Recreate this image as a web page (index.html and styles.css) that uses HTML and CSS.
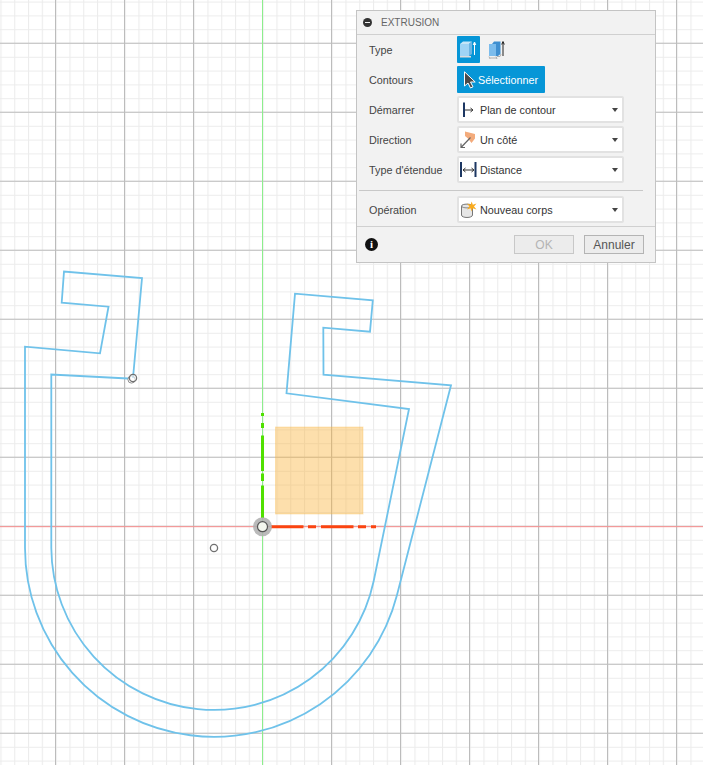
FILE: index.html
```html
<!DOCTYPE html>
<html lang="fr">
<head>
<meta charset="utf-8">
<title>Extrusion</title>
<link rel="stylesheet" href="styles.css">
</head>
<body>
<main class="viewport">
  <svg class="scene" width="703" height="765" viewBox="0 0 703 765" xmlns="http://www.w3.org/2000/svg">
    <defs>
      <pattern id="minor" patternUnits="userSpaceOnUse" x="0.4" y="1.6" width="13.8" height="13.8">
        <path class="grid-minor" d="M0.5 0V13.8M0 0.5H13.8"/>
      </pattern>
      <pattern id="major" patternUnits="userSpaceOnUse" x="55" y="42.7" width="69" height="69">
        <path class="grid-major" d="M0.5 0V69M0 0.5H69"/>
      </pattern>
    </defs>
    <rect width="703" height="765" fill="#fff"/>
    <rect width="703" height="765" fill="url(#minor)"/>
    <rect width="703" height="765" fill="url(#major)"/>
    <rect class="profile" x="275.5" y="427" width="87.5" height="87"/>
    <path class="axis-line-red" d="M0 526.7H703"/>
    <path class="axis-line-green" d="M262.5 0V765"/>
    <path class="sketch" d="M133 378L142 278L64 271.5L61.7 302.7L108.5 306.7L100 353.3L25 346.7V548A189 189 0 0 0 397 595L451 385.3L323.5 374.7L323.3 327.7L370 331.7L372.8 300.3L295 293.7L286.5 393.3L409 409L373.7 581A163 163 0 0 1 51.3 548V374.5L128 378.5"/>
    <path class="axis-red" d="M271 526.7H303.5M308 526.7H316M321 526.7H353.5M358 526.7H366M371 526.7H376"/>
    <path class="axis-green" d="M262.5 413V416M262.5 423V428M262.5 435.500V471M262.5 473.500V481M262.5 485.500V518"/>
    <circle class="origin-halo" cx="262.5" cy="526.7" r="9.5"/>
    <circle class="origin-dot" cx="262.5" cy="526.7" r="5"/>
    <circle class="point" cx="214" cy="548" r="3.6"/>
    <circle class="point-faint" cx="131.5" cy="379.5" r="3.6"/>
    <circle class="point" cx="133" cy="378" r="3.6"/>
  </svg>

  <section class="dialog">
    <header class="dialog-title">
      <span class="collapse"></span>
      <h1 class="title-text">EXTRUSION</h1>
    </header>
    <div class="dialog-body">
      <div class="row">
        <span class="label">Type</span>
        <div class="type-group">
          <button class="type-btn is-active">
            <svg width="23" height="27" viewBox="0 0 23 27"><path class="cube-front" d="M3 8H12V20H3Z"/><path class="cube-top" d="M3 8L6 5.500H15L12 8Z"/><path class="cube-side" d="M12 8L15 5.500V18L12 20Z"/><path class="cube-base" d="M3 20H14V21.500H3Z"/><path class="arrow-white" d="M17.500 19V7M16.200 9L17.500 6L18.800 9"/></svg>
          </button>
          <button class="type-btn">
            <svg width="23" height="27" viewBox="0 0 23 27"><path class="thin-back" d="M10 8L12 5.500H18.500V18L16 20H10Z"/><path class="thin-front" d="M7 8H14V20H7Z"/><path class="thin-edge" d="M7 20.500L8 23M14 20.500L15 23M8 22H15M15 20.500H18L19 18"/><path class="arrow-dark" d="M21 20V6M19.700 8.500L21 5.500L22.300 8.500"/></svg>
          </button>
        </div>
      </div>
      <div class="row">
        <span class="label">Contours</span>
        <button class="select-btn">
          <svg width="13" height="18" viewBox="0 0 13 18"><path class="cursor" d="M1.500 0.800V15L5 12L7.500 17L10 15.800L7.500 11H12.200Z"/></svg>
          <span>Sélectionner</span>
        </button>
      </div>
      <div class="row">
        <span class="label">Démarrer</span>
        <div class="combo">
          <svg class="combo-icon" width="20" height="20" viewBox="0 0 20 20"><path class="navy-bar" d="M4 2.500V17"/><path class="thin-dark" d="M5 10H12.500M10.500 8L13 10L10.500 12"/></svg>
          <span class="combo-text">Plan de contour</span>
          <span class="caret"></span>
        </div>
      </div>
      <div class="row">
        <span class="label">Direction</span>
        <div class="combo">
          <svg class="combo-icon" width="20" height="20" viewBox="0 0 20 20"><path class="flag" d="M5 1.500L15 4V8.500L11.500 13L8 8.500L5 6Z"/><path class="thin-grey" d="M1 17.500L10.500 7.500M1 13.500V17.500H5"/></svg>
          <span class="combo-text">Un côté</span>
          <span class="caret"></span>
        </div>
      </div>
      <div class="row">
        <span class="label">Type d'étendue</span>
        <div class="combo">
          <svg class="combo-icon" width="20" height="20" viewBox="0 0 20 20"><path class="navy-bar" d="M1 2V17M15.500 2V17"/><path class="thin-dark" d="M3 10H14M5.500 8L3 10L5.500 12M11.500 8L14 10L11.500 12"/></svg>
          <span class="combo-text">Distance</span>
          <span class="caret"></span>
        </div>
      </div>
      <div class="rule"></div>
      <div class="row">
        <span class="label">Opération</span>
        <div class="combo">
          <svg class="combo-icon" width="20" height="20" viewBox="0 0 20 20"><path class="can" d="M1.500 6C1.500 3.500 12.500 3.500 12.500 6V15C12.500 18.300 1.500 18.300 1.500 15Z"/><path class="can-top" d="M1.500 6C1.500 8.500 12.500 8.500 12.500 6"/><path class="spark" d="M11.700 1.500L12.800 4.700L16.500 3.500L14 6.500L16.500 9.500L12.800 8.300L11.700 11.500L10.600 8.300L7 9.500L9.400 6.500L7 3.500L10.600 4.700Z"/></svg>
          <span class="combo-text">Nouveau corps</span>
          <span class="caret"></span>
        </div>
      </div>
    </div>
    <footer class="dialog-foot">
      <span class="info">i</span>
      <div class="foot-actions">
        <button class="foot-btn is-disabled">OK</button>
        <button class="foot-btn">Annuler</button>
      </div>
    </footer>
  </section>
</main>
</body>
</html>
```

FILE: styles.css
```css
* { box-sizing: border-box; }
html, body { margin: 0; padding: 0; }
body {
  width: 703px;
  height: 765px;
  overflow: hidden;
  background: #fff;
  font-family: "Liberation Sans", Arial, sans-serif;
  font-size: 10.8px;
  color: #3c3c3c;
}
.viewport { position: relative; width: 703px; height: 765px; overflow: hidden; }
.scene { display: block; }

.grid-minor { fill: none; stroke: #ececec; stroke-width: 1.2; }
.grid-major { fill: none; stroke: #bcbcbc; stroke-width: 1.1; }
.profile { fill: #fab23a; stroke: #fab23a; stroke-width: 1; fill-opacity: .42; stroke-opacity: .3; }
.axis-line-red { fill: none; stroke: #fb8f8f; stroke-width: 1; }
.axis-line-green { fill: none; stroke: #8cee8c; stroke-width: 1; }
.sketch { fill: none; stroke: #6fc2ea; stroke-width: 1.8; }
.axis-red { fill: none; stroke: #fb4410; stroke-width: 3; }
.axis-green { fill: none; stroke: #50e000; stroke-width: 3; }
.origin-halo { fill: #aeaeae; fill-opacity: .85; }
.origin-dot { fill: #f3f6ee; stroke: #555; stroke-width: 1.2; }
.point { fill: #fff; fill-opacity: .6; stroke: #707070; stroke-width: 1.3; }
.point-faint { fill: none; stroke: #909090; stroke-width: 1; }

.dialog {
  position: absolute;
  left: 356px;
  top: 10px;
  width: 300px;
  height: 253px;
  display: flex;
  flex-direction: column;
  background: #f2f2f2;
  border: 1px solid #c4c4c4;
}
.dialog-title {
  display: flex;
  align-items: center;
  height: 24px;
  padding-left: 6px;
  gap: 9px;
  border-bottom: 1px solid #d0d0d0;
  flex: none;
}
.collapse {
  width: 9px;
  height: 9px;
  border-radius: 50%;
  background: #333;
  display: flex;
  align-items: center;
  justify-content: center;
}
.collapse::after { content: ""; width: 5px; height: 1px; background: #f2f2f2; }
.title-text { margin: 0; font-size: 10px; font-weight: 400; color: #666; }
.dialog-body { display: flex; flex-direction: column; gap: 3px; padding: 1px 0 0 1px; flex: none; }
.row { display: flex; align-items: center; height: 27px; padding-left: 11px; }
.label { width: 88px; flex: none; color: #444; }
.type-group { display: flex; gap: 2px; }
.type-btn {
  width: 23px;
  height: 27px;
  padding: 0;
  border: 0;
  border-radius: 1px;
  background: transparent;
  display: flex;
  align-items: center;
  justify-content: center;
}
.type-btn.is-active { background: #0696d7; }
.select-btn {
  display: flex;
  align-items: center;
  gap: 2px;
  width: 88px;
  height: 27px;
  padding: 0 0 0 6px;
  border: 0;
  border-radius: 1px;
  background: #0696d7;
  color: #fff;
  font: inherit;
}
.combo {
  display: flex;
  align-items: center;
  width: 167px;
  height: 27px;
  padding: 0 4px 0 1px;
  background: #fff;
  border: 2px solid #e2e2e2;
  border-radius: 2px;
}
.combo-icon { flex: none; }
.combo-text { flex: 1; color: #333; }
.caret { width: 0; height: 0; border-left: 3.5px solid transparent; border-right: 3.5px solid transparent; border-top: 4px solid #444; }
.rule { height: 1px; background: #c8c8c8; width: 284px; margin: 4px 0 2px 1px; }
.dialog-foot {
  flex: 1;
  margin-top: 3px;
  display: flex;
  align-items: center;
  justify-content: space-between;
  padding: 0 11px 0 8px;
  border-top: 1px solid #d0d0d0;
}
.info {
  width: 13px;
  height: 13px;
  border-radius: 50%;
  background: #111;
  color: #fff;
  font: 700 11px/13px "Liberation Serif", serif;
  text-align: center;
}
.foot-actions { display: flex; gap: 10px; }
.foot-btn {
  width: 60px;
  height: 19px;
  padding: 0;
  background: #ececec;
  border: 1px solid #b4b4b4;
  color: #555;
  font-family: inherit;
  font-size: 12px;
}
.foot-btn.is-disabled { color: #b4b4b4; border-color: #c8c8c8; }

.cube-front { fill: #9fd4f5; }
.cube-top { fill: #c6e6f8; }
.cube-side { fill: #6cb4e2; }
.cube-base { fill: #dcdcdc; }
.arrow-white { fill: none; stroke: #fff; stroke-width: 1; }
.arrow-dark { fill: none; stroke: #222; stroke-width: 1; }
.thin-back { fill: #3f8fd0; }
.thin-front { fill: #7cbcec; }
.thin-edge { fill: none; stroke: #b0b0b0; stroke-width: 1; }
.cursor { fill: #4a4a4a; stroke: #fff; stroke-width: 1; }
.navy-bar { fill: none; stroke: #1c3763; stroke-width: 2; }
.thin-dark { fill: none; stroke: #333; stroke-width: 1; }
.thin-grey { fill: none; stroke: #666; stroke-width: 1.2; }
.flag { fill: #f3ab7c; }
.can { fill: #e6e6e6; stroke: #777; stroke-width: 1; }
.can-top { fill: none; stroke: #888; stroke-width: 1; }
.spark { fill: #f9ab1e; }
```
